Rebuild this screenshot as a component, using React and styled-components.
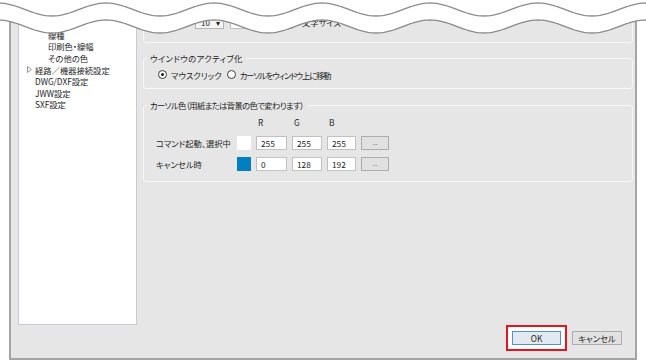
import React from 'react';
import styled, { createGlobalStyle } from 'styled-components';

const GlobalStyle = createGlobalStyle`
  html, body {
    margin: 0;
    padding: 0;
    background: #fff;
  }
  body {
    width: 646px;
    height: 362px;
    overflow: hidden;
    font-family: "Noto Sans CJK JP", "Noto Sans", sans-serif;
    font-feature-settings: "palt";
    color: #1e1e1e;
  }
`;

// torn-edge wave at the top of the capture
const WAVE = { period: 108, crestX: 430, amp: 6.5, mid: 9.5, gap: 17 };

const Page = styled.div`
  position: relative;
  width: 646px;
  height: 362px;
  background: #fff;
`;

const Dialog = styled.div`
  box-sizing: border-box;
  margin-left: 9px;
  width: 628px;
  height: 360px;
  padding: 0 2px 0 7px;
  background: #e6e6e6;
  border: 2px solid #a4a4a4;
  border-top: none;
  display: flex;
  flex-direction: column;
`;

const MainRow = styled.div`
  display: flex;
  gap: 6px;
  height: 325px;
  flex-shrink: 0;
`;

const Tree = styled.div`
  box-sizing: border-box;
  width: 119px;
  padding-top: 29px;
  background: #fff;
  border: 1px solid #c9cad6;
  border-top: none;
`;

const TreeItem = styled.div`
  display: flex;
  align-items: center;
  height: 11.6px;
  padding-left: ${p => (p.$level === 0 ? 6 : 19)}px;
  font-size: 8.3px;
  white-space: nowrap;
`;

const Expander = styled.span`
  display: inline-flex;
  align-items: center;
  width: 10px;
  flex-shrink: 0;
  padding-left: 2px;
  box-sizing: border-box;
`;

const RightPane = styled.div`
  flex: 1;
  display: flex;
  flex-direction: column;
`;

const Group = styled.fieldset`
  margin: ${p => p.$top}px 0 0;
  padding: 0;
  min-width: 0;
  border: 1px solid #f7f7f7;
  border-radius: 3px;
`;

const Legend = styled.legend`
  margin-left: 3px;
  padding: 0 3px;
  font-size: 8.3px;
  line-height: 11px;
  letter-spacing: ${p => p.$ls || 0}px;
`;

const TopRow = styled.div`
  display: flex;
  align-items: center;
  height: 14px;
  padding: 13px 0 13px 51px;
  font-size: 8.3px;
`;

const Select = styled.div`
  box-sizing: border-box;
  display: flex;
  align-items: center;
  justify-content: space-between;
  width: 29px;
  height: 14px;
  padding: 0 3px 0 5px;
  background: #f4f4f4;
  border: 1px solid #b4b4b4;
  font-size: 8px;
`;

const TextBox = styled.div`
  box-sizing: border-box;
  width: ${p => p.$w}px;
  height: 14px;
  margin-left: ${p => p.$ml || 0}px;
  padding-left: 4px;
  background: #fff;
  border: 1px solid #c1c1c1;
  font-size: 8.3px;
  line-height: 12px;
`;

const TopLabel = styled.span`
  margin-left: 9px;
`;

const RadioRow = styled.div`
  display: flex;
  align-items: center;
  height: 11px;
  padding: 5px 0 8px 14px;
  font-size: 8.3px;
`;

const Radio = styled.span`
  box-sizing: border-box;
  display: inline-flex;
  align-items: center;
  justify-content: center;
  width: 9px;
  height: 9px;
  margin: 0 4px 0 ${p => p.$ml || 0}px;
  border: 1px solid #3a3a3a;
  border-radius: 50%;
  background: #fff;
  &::after {
    content: '';
    width: 3px;
    height: 3px;
    border-radius: 50%;
    background: ${p => (p.$checked ? '#1a1a1a' : 'transparent')};
  }
`;

const RadioLabel = styled.span`
  white-space: nowrap;
  letter-spacing: ${p => p.$ls || 0}px;
`;

const ColorGrid = styled.div`
  display: grid;
  grid-template-columns: 76px 14px 31px 30px 29px 28px;
  grid-template-rows: 11px 14px 14px;
  column-gap: 5px;
  row-gap: 7.5px;
  align-items: center;
  padding: 6px 0 10px 12px;
  font-size: 8.3px;
`;

const HeaderCell = styled.div`
  grid-column: ${p => p.$col};
  line-height: 11px;
  padding-left: 2px;
`;

const RowLabel = styled.span`
  grid-column: 1;
  white-space: nowrap;
`;

const Swatch = styled.div`
  width: 14px;
  height: 14px;
  background: ${p => p.$color};
`;

const DotsButton = styled.div`
  box-sizing: border-box;
  height: 14px;
  display: flex;
  justify-content: center;
  align-items: flex-end;
  padding-bottom: 3px;
  background: #e1e1e1;
  border: 1px solid #adadad;
  font-size: 6px;
  line-height: 6px;
  color: #444;
`;

const Footer = styled.div`
  display: flex;
  align-items: center;
  justify-content: flex-end;
  gap: 5px;
  height: 26px;
  padding-right: 11px;
`;

const Highlight = styled.div`
  padding: 4px;
  background: #fff;
  border: 2px solid #e5141d;
`;

const Button = styled.div`
  box-sizing: border-box;
  display: flex;
  align-items: center;
  justify-content: center;
  width: ${p => p.$w}px;
  height: 14px;
  background: ${p => (p.$default ? '#e3e9f0' : '#e1e1e1')};
  border: 1px solid ${p => (p.$default ? '#4f93d4' : '#adadad')};
  font-size: 8.3px;
`;

const WaveSvg = styled.svg`
  position: absolute;
  top: 0;
  left: 0;
`;

const TREE = [
  { label: '線種', level: 1 },
  { label: '印刷色・線幅', level: 1 },
  { label: 'その他の色', level: 1 },
  { label: '経路／機器接続設定', level: 0, expandable: true },
  { label: 'DWG/DXF設定', level: 0 },
  { label: 'JWW設定', level: 0 },
  { label: 'SXF設定', level: 0 },
];

const CURSOR_COLORS = [
  { label: 'コマンド起動、選択中', rgb: [255, 255, 255] },
  { label: 'キャンセル時', rgb: [0, 128, 192] },
];

const waveY = (x, offset) =>
  WAVE.mid + offset - WAVE.amp * Math.cos((2 * Math.PI * (x - WAVE.crestX)) / WAVE.period);

const wavePoints = offset => {
  const pts = [];
  for (let x = 0; x <= 646; x += 2) pts.push(`${x},${waveY(x, offset).toFixed(2)}`);
  return pts;
};

function TornEdge() {
  const upper = wavePoints(0);
  const lower = wavePoints(WAVE.gap);
  const fill = `M0,0 L646,0 L${[...lower].reverse().join(' L')} Z`;
  return (
    <WaveSvg width="646" height="40" viewBox="0 0 646 40">
      <path d={fill} fill="#fff" />
      <path d={`M${upper.join(' L')}`} fill="none" stroke="#8a8a8a" strokeWidth="1.3" />
      <path d={`M${lower.join(' L')}`} fill="none" stroke="#8a8a8a" strokeWidth="1.3" />
    </WaveSvg>
  );
}

export default function App() {
  return (
    <Page>
      <GlobalStyle />
      <Dialog>
        <MainRow>
          <Tree>
            {TREE.map(item => (
              <TreeItem key={item.label} $level={item.level}>
                <Expander>
                  {item.expandable && (
                    <svg width="5" height="7" viewBox="0 0 5 7">
                      <path d="M0.5 0.5 L4.5 3.5 L0.5 6.5 Z" fill="none" stroke="#8c8c8c" strokeWidth="0.9" />
                    </svg>
                  )}
                </Expander>
                {item.label}
              </TreeItem>
            ))}
          </Tree>
          <RightPane>
            <Group $top={1}>
              <TopRow>
                <Select>
                  <span>10</span>
                  <span>▾</span>
                </Select>
                <TextBox $w={63} $ml={6} />
                <TopLabel>文字サイズ</TopLabel>
              </TopRow>
            </Group>
            <Group $top={10}>
              <Legend $ls={0.4}>ウインドウのアクティブ化</Legend>
              <RadioRow>
                <Radio $checked />
                <RadioLabel>マウスクリック</RadioLabel>
                <Radio $ml={5} />
                <RadioLabel $ls={-1.1}>カーソルをウィンドウ上に移動</RadioLabel>
              </RadioRow>
            </Group>
            <Group $top={11}>
              <Legend $ls={-0.6}>カーソル色（用紙または背景の色で変わります）</Legend>
              <ColorGrid>
                <HeaderCell $col={3}>R</HeaderCell>
                <HeaderCell $col={4}>G</HeaderCell>
                <HeaderCell $col={5}>B</HeaderCell>
                {CURSOR_COLORS.map(row => (
                  <React.Fragment key={row.label}>
                    <RowLabel>{row.label}</RowLabel>
                    <Swatch $color={`rgb(${row.rgb.join(',')})`} />
                    {row.rgb.map((v, i) => (
                      <TextBox key={i} $w={[31, 30, 29][i]}>{v}</TextBox>
                    ))}
                    <DotsButton>...</DotsButton>
                  </React.Fragment>
                ))}
              </ColorGrid>
            </Group>
          </RightPane>
        </MainRow>
        <Footer>
          <Highlight>
            <Button $w={49} $default>OK</Button>
          </Highlight>
          <Button $w={50}>キャンセル</Button>
        </Footer>
      </Dialog>
      <TornEdge />
    </Page>
  );
}
